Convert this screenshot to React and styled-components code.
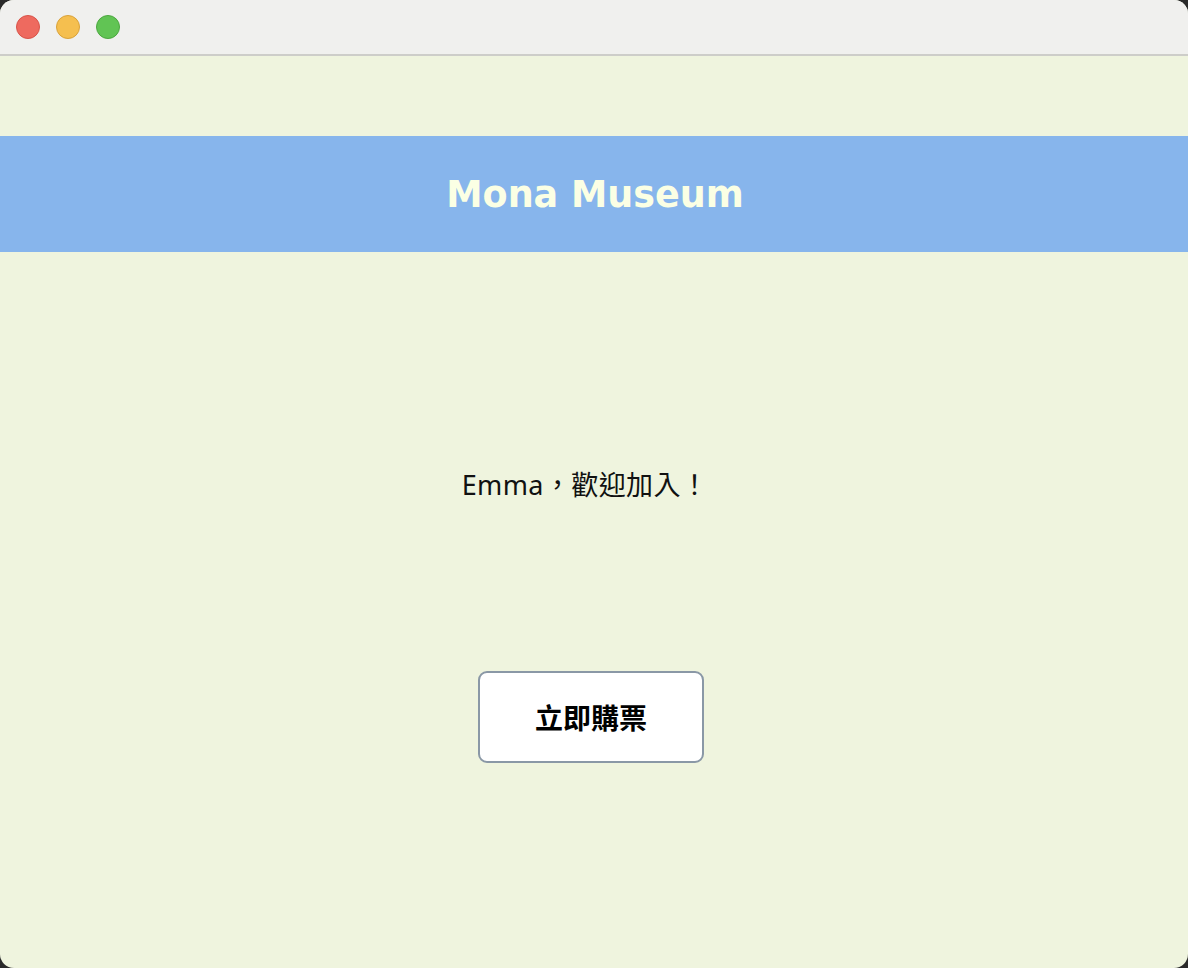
import React from "react";
import styled, { createGlobalStyle } from "styled-components";

const Global = createGlobalStyle`
  html, body { margin: 0; padding: 0; background: #2a2a2a; }
  #root { width: 1188px; height: 968px; }
`;

const Window = styled.div`
  width: 1188px;
  height: 968px;
  border-radius: 14px;
  overflow: hidden;
  background: #eff4de;
  display: flex;
  flex-direction: column;
  font-family: "DejaVu Sans", "Noto Sans CJK TC", sans-serif;
`;

const TitleBar = styled.div`
  height: 54px;
  flex: none;
  background: #f0f0ee;
  border-bottom: 2px solid #cdcdc9;
  display: flex;
  align-items: center;
  gap: 16px;
  padding-left: 16px;
`;

const Light = styled.span`
  width: 24px;
  height: 24px;
  border-radius: 50%;
  box-sizing: border-box;
  background: ${(p) => p.$bg};
  border: 1px solid ${(p) => p.$border};
`;

const Content = styled.main`
  flex: 1;
  display: flex;
  flex-direction: column;
  padding-top: 80px;
`;

const Header = styled.header`
  height: 116px;
  background: #87b5ec;
  display: flex;
  align-items: center;
  justify-content: center;
`;

const Title = styled.h1`
  margin: 0;
  font-size: 36.5px;
  font-weight: bold;
  color: #fbffe4;
  padding-left: 2px;
`;

const Greeting = styled.p`
  margin: 217px 0 0;
  text-align: center;
  font-family: "Noto Sans", "Noto Sans CJK TC", sans-serif;
  font-size: 27px;
  line-height: 32px;
  letter-spacing: 0.4px;
  color: #111;
  padding-right: 18px;
`;

const ButtonRow = styled.div`
  display: flex;
  justify-content: center;
  margin-top: 170px;
  padding-right: 6px;
`;

const BuyButton = styled.button`
  width: 226px;
  height: 92px;
  background: #ffffff;
  border: 2.5px solid #8a98a6;
  border-radius: 9px;
  font-family: "DejaVu Sans", "Noto Sans CJK TC", sans-serif;
  font-size: 28px;
  font-weight: bold;
  color: #000;
  cursor: pointer;
`;

export default function App() {
  return (
    <>
      <Global />
      <Window>
        <TitleBar>
          <Light $bg="#ee6a5f" $border="#d85449" />
          <Light $bg="#f5bf4f" $border="#d9a23a" />
          <Light $bg="#61c454" $border="#4ca73f" />
        </TitleBar>
        <Content>
          <Header>
            <Title>Mona Museum</Title>
          </Header>
          <Greeting>Emma，歡迎加入！</Greeting>
          <ButtonRow>
            <BuyButton>立即購票</BuyButton>
          </ButtonRow>
        </Content>
      </Window>
    </>
  );
}
